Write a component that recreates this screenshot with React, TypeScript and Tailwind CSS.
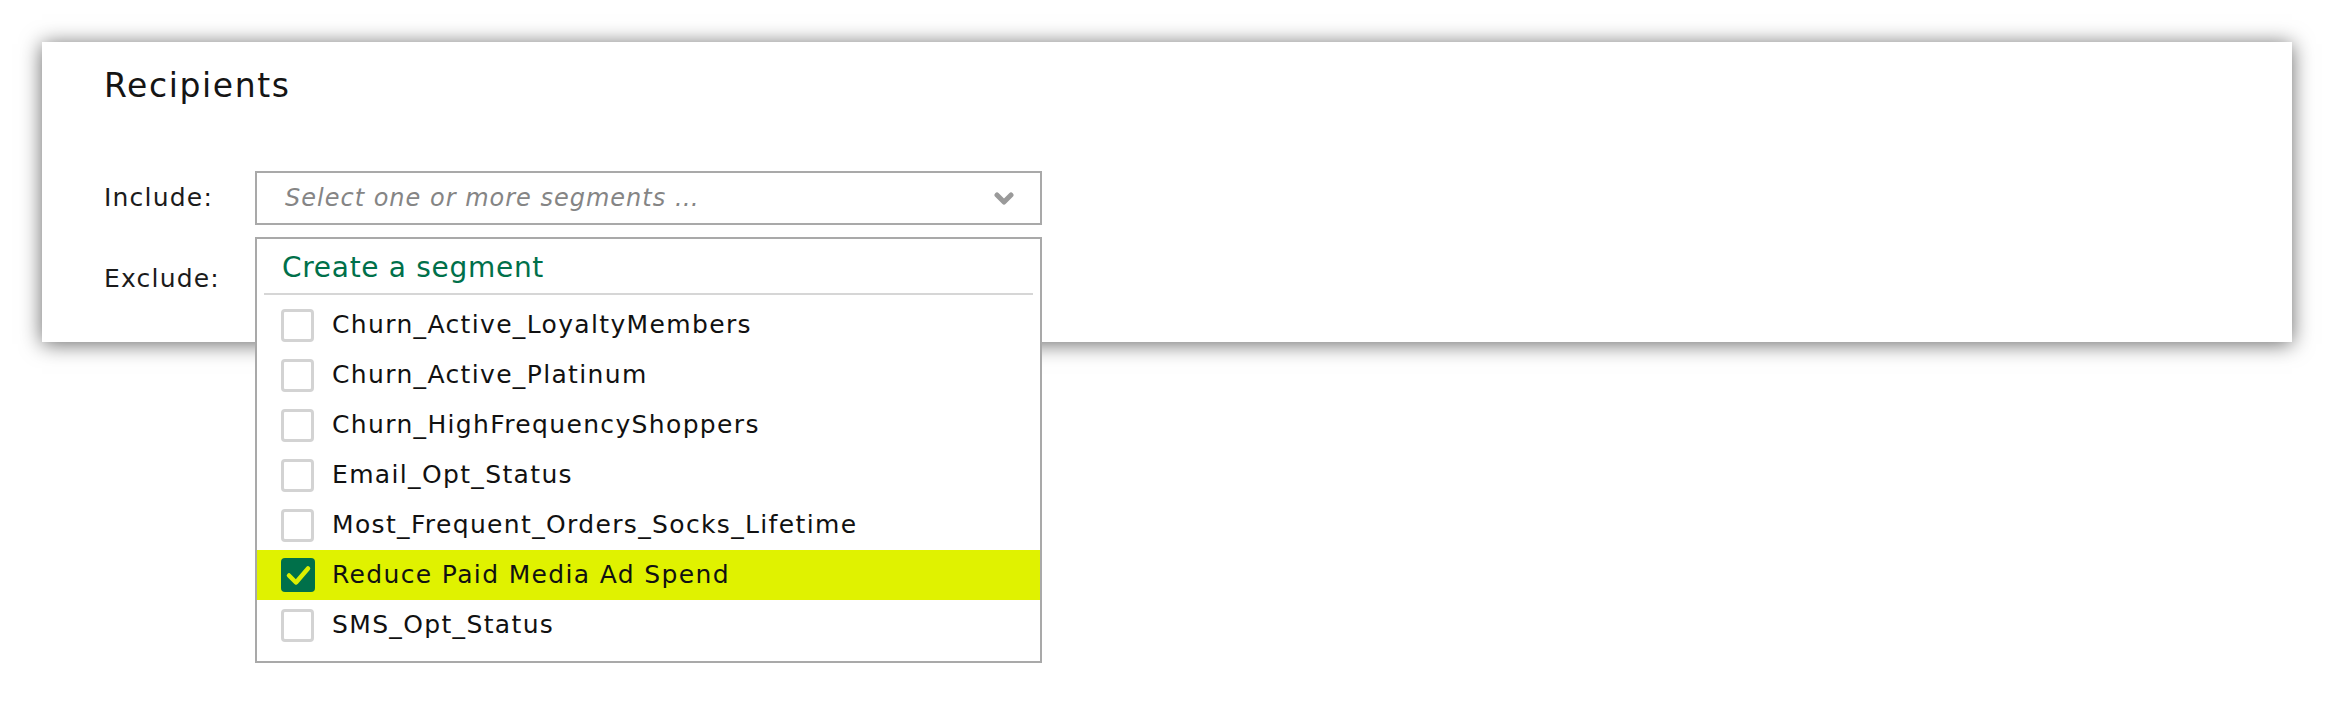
import React from "react";

const items = [
  { label: "Churn_Active_LoyaltyMembers", checked: false },
  { label: "Churn_Active_Platinum", checked: false },
  { label: "Churn_HighFrequencyShoppers", checked: false },
  { label: "Email_Opt_Status", checked: false },
  { label: "Most_Frequent_Orders_Socks_Lifetime", checked: false },
  { label: "Reduce Paid Media Ad Spend", checked: true },
  { label: "SMS_Opt_Status", checked: false },
];

function Chevron() {
  return (
    <svg width="20" height="13" viewBox="0 0 20 13" fill="none">
      <path d="M3 3 L10 10 L17 3" stroke="#9a9a9a" strokeWidth="5" strokeLinecap="round" strokeLinejoin="round" />
    </svg>
  );
}

function Checkbox({ checked }: { checked: boolean }) {
  if (checked) {
    return (
      <div className="w-[34px] h-[34px] rounded-[4px] bg-[#00704a] flex items-center justify-center shrink-0">
        <svg width="34" height="34" viewBox="0 0 34 34" fill="none">
          <path d="M8 17.5 L15 24.5 L27 10.5" stroke="#dcef00" strokeWidth="4.5" strokeLinecap="round" strokeLinejoin="round" />
        </svg>
      </div>
    );
  }
  return <div className="w-[33px] h-[33px] rounded-[4px] border-[3px] border-[#d3d3d3] bg-white shrink-0" />;
}

export default function App() {
  return (
    <div className="min-h-screen bg-white pt-[42px] px-[42px] font-['DejaVu_Sans',sans-serif]">
      <div className="relative h-[300px] bg-white shadow-[0_2px_20px_rgba(0,0,0,0.6)] pl-[62px] pt-[24px]">
        <h2 className="text-[33px] leading-[40px] tracking-[1.6px] text-[#151515] font-normal">Recipients</h2>

        <div className="mt-[65px] flex items-center h-[54px]">
          <div className="w-[151px] text-[25px] leading-[30px] tracking-[1.2px] text-[#1b1b1b]">Include:</div>
          <div className="relative">
            <div className="w-[787px] h-[54px] border-2 border-[#a9a9a9] bg-white flex items-center justify-between pl-[28px] pr-[26px]">
              <span className="italic text-[24px] leading-[30px] tracking-[1px] text-[#858585]">Select one or more segments …</span>
              <Chevron />
            </div>

            <div className="absolute left-0 top-[66px] z-10 w-[787px] h-[426px] border-2 border-[#a9a9a9] bg-white pt-[12px]">
              <div className="pl-[25px] text-[28px] leading-[34px] tracking-[0.7px] text-[#00704a]">Create a segment</div>
              <div className="mx-[7px] mt-[8px] h-[2px] bg-[#d6d6d6]" />
              <div className="mt-[5px] flex flex-col">
                {items.map((it) => (
                  <div
                    key={it.label}
                    className={
                      it.checked
                        ? "flex items-center h-[50px] pl-[24px] gap-[18px] bg-[#e0f200]"
                        : "flex items-center h-[50px] pl-[24px] gap-[18px] bg-white"
                    }
                  >
                    <Checkbox checked={it.checked} />
                    <span className={it.checked ? "text-[25px] leading-[30px] tracking-[1.35px] text-[#111] -ml-[1px]" : "text-[25px] leading-[30px] tracking-[1.35px] text-[#111]"}>
                      {it.label}
                    </span>
                  </div>
                ))}
              </div>
            </div>
          </div>
        </div>

        <div className="mt-[27px] flex items-center h-[54px]">
          <div className="w-[151px] text-[25px] leading-[30px] tracking-[1.2px] text-[#1b1b1b]">Exclude:</div>
          <div className="w-[787px] h-[54px] border-2 border-[#a9a9a9] bg-white" />
        </div>
      </div>
    </div>
  );
}
